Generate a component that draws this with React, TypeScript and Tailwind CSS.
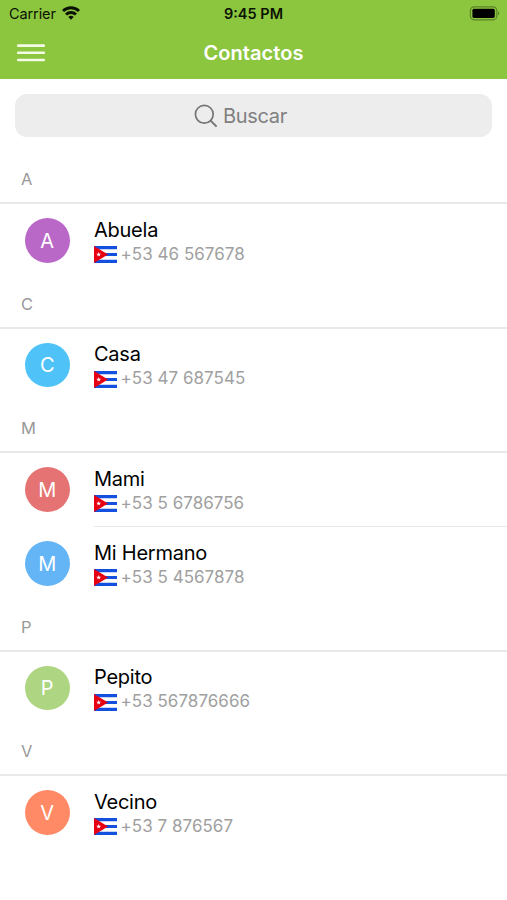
interface Contact {
  name: string;
  phone: string;
  color: string;
}

interface Section {
  letter: string;
  contacts: Contact[];
}

const sections: Section[] = [
  { letter: 'A', contacts: [{ name: 'Abuela', phone: '+53 46 567678', color: 'bg-[#ba68c8]' }] },
  { letter: 'C', contacts: [{ name: 'Casa', phone: '+53 47 687545', color: 'bg-[#4fc3f7]' }] },
  {
    letter: 'M',
    contacts: [
      { name: 'Mami', phone: '+53 5 6786756', color: 'bg-[#e57373]' },
      { name: 'Mi Hermano', phone: '+53 5 4567878', color: 'bg-[#64b5f6]' },
    ],
  },
  { letter: 'P', contacts: [{ name: 'Pepito', phone: '+53 567876666', color: 'bg-[#aed581]' }] },
  { letter: 'V', contacts: [{ name: 'Vecino', phone: '+53 7 876567', color: 'bg-[#ff8a65]' }] },
];

const WifiIcon = () => (
  <svg width="18" height="14" viewBox="0 0 18 14" className="-mt-[1.5px]" fill="none" stroke="#0b1203" strokeWidth="2.9">
    <path d="M1 5a11.4 11.4 0 0 1 16 0" />
    <path d="M4 8.5a7.2 7.2 0 0 1 10 0" />
    <path d="M9 13.8 6.3 11a4 4 0 0 1 5.4 0z" fill="#0b1203" stroke="none" />
  </svg>
);

const BatteryIcon = () => (
  <svg width="31" height="15" viewBox="0 0 31 15">
    <rect x="1.4" y="0.8" width="26.4" height="13" rx="3.8" fill="none" stroke="#5c8327" strokeWidth="1.2" />
    <rect x="3.4" y="2.7" width="22.4" height="9.2" rx="1.6" fill="#000" />
    <path d="M29 5.2c1.6.6 1.6 3.6 0 4.2z" fill="#5c8327" />
  </svg>
);

const SearchIcon = () => (
  <svg width="24" height="24" viewBox="0 0 24 24" fill="none" stroke="#757575" strokeWidth="1.7">
    <circle cx="10.3" cy="10.3" r="8.9" />
    <path d="m16.6 16.6 6 6" strokeWidth="2" />
  </svg>
);

const CubaFlag = () => (
  <svg width="23" height="17" viewBox="0 0 23 17">
    <path fill="#fff" d="M0 0h23v17H0z" />
    <path fill="#1450e0" d="M0 0h23v3.2H0zM0 6.9h23v3.2H0zM0 13.8h23V17H0z" />
    <path fill="#e60012" d="M0 0 14 8.5 0 17z" />
    <path
      fill="#fff"
      d="m4.7 6.1.6 1.7h1.8L5.7 8.9l.5 1.7-1.5-1-1.5 1 .5-1.7-1.4-1.1h1.8z"
    />
  </svg>
);

const Header = () => (
  <header className="h-[79px] bg-[#8cc63f]">
    <div className="grid h-[27px] grid-cols-3 items-center px-2 text-[14.5px] text-[#0b1203]">
      <div className="flex items-center gap-[6px] pl-px">
        <span className="tracking-[-0.1px]">Carrier</span>
        <WifiIcon />
      </div>
      <span className="text-center font-semibold">9:45 PM</span>
      <div className="-mr-px flex justify-end">
        <BatteryIcon />
      </div>
    </div>
    <div className="grid h-[52px] grid-cols-3 items-center px-[17px]">
      <button aria-label="Menu">
        <svg width="28" height="20" viewBox="0 0 28 20" stroke="#f4fbe6" strokeWidth="2.6" strokeLinecap="round">
          <path d="M1.2 2.6h25.6M1.2 9.8h25.6M1.2 17h25.6" />
        </svg>
      </button>
      <h1 className="text-center text-[20px] font-semibold tracking-[0.05px] text-white">Contactos</h1>
    </div>
  </header>
);

const ContactRow = ({ contact, divided }: { contact: Contact; divided: boolean }) => (
  <li className="flex h-[73.8px] pl-[25px]">
    <div
      className={`mt-[14.2px] flex size-[44.5px] shrink-0 items-center justify-center rounded-full text-[20px] text-white ${contact.color}`}
    >
      {contact.name[0]}
    </div>
    <div
      className={`ml-[24px] flex grow flex-col border-t pt-[12.8px] ${divided ? '-mt-px border-[#e8e8e8] pt-[13.6px]' : 'border-transparent'}`}
    >
      <span className="pl-[0.5px] text-[20px] leading-6 tracking-[-0.25px] text-black">{contact.name}</span>
      <div className="flex h-[25.2px] items-center gap-1">
        <CubaFlag />
        <span className="text-[17px] tracking-[0.03px] text-[#a0a0a0]">{contact.phone}</span>
      </div>
    </div>
  </li>
);

export default function App() {
  return (
    <div className="h-[900px] w-[507px] overflow-hidden bg-white font-['Inter',sans-serif]">
      <Header />
      <div className="px-[15px] pt-[15px]">
        <div className="flex h-[43px] items-center justify-center gap-[5px] rounded-[12px] bg-[#ededed] pr-[26px] text-[20px] text-[#808080]">
          <SearchIcon />
          <span className="tracking-[-0.3px]">Buscar</span>
        </div>
      </div>
      <main className="pt-[16.3px]">
        {sections.map((section) => (
          <section key={section.letter}>
            <h2 className="flex h-[50.8px] items-center border-b-2 border-[#e9e9e9] pl-[21px] pt-[3.6px] text-[16.5px] text-[#999]">
              {section.letter}
            </h2>
            <ul>
              {section.contacts.map((contact, index) => (
                <ContactRow key={contact.name} contact={contact} divided={index > 0} />
              ))}
            </ul>
          </section>
        ))}
      </main>
    </div>
  );
}
